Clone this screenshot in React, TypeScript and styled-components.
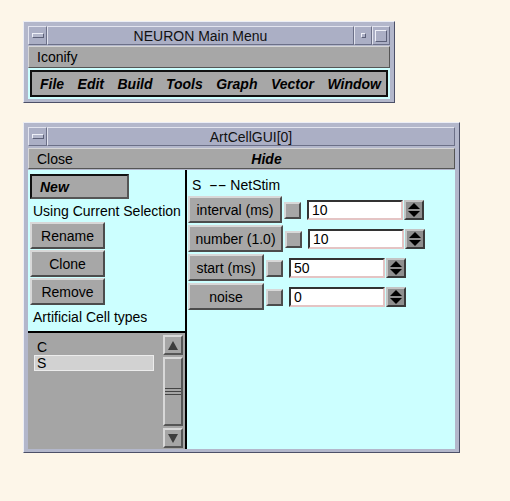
import React from 'react';
import styled, { createGlobalStyle, css } from 'styled-components';

const GlobalStyle = createGlobalStyle`
  html, body { margin: 0; padding: 0; background: #fdf6e9; }
  body {
    font-family: "Liberation Sans", Arial, sans-serif;
    font-size: 14px;
    color: #000;
  }
`;

const bevel = (light: string, dark: string, w = 2) => css`
  border: ${w}px solid;
  border-color: ${light} ${dark} ${dark} ${light};
`;

const Page = styled.div`
  width: 510px;
  height: 501px;
  box-sizing: border-box;
  padding: 21px 0 0 23px;
  display: flex;
  flex-direction: column;
  align-items: flex-start;
  gap: 19px;
`;

const Frame = styled.div<{ $w: number }>`
  width: ${p => p.$w}px;
  box-sizing: border-box;
  background: #b3b7cb;
  border: 1px solid;
  border-color: #eceef6 #4c5068 #4c5068 #eceef6;
  padding: 4px 4px 3px;
  display: flex;
  flex-direction: column;
`;

const TitleBar = styled.div`
  height: 19px;
  display: flex;
  margin-bottom: 1px;
`;

const TitleSeg = styled.div<{ $w?: number }>`
  ${bevel('#e2e4ef', '#6c7088', 1)}
  background: #abafc5;
  box-sizing: border-box;
  ${p => (p.$w ? `width: ${p.$w}px;` : 'flex: 1;')}
  display: flex;
  align-items: center;
  justify-content: center;
  color: #111;
  font-size: 14px;
`;

const MinGlyph = styled.div`
  width: 10px;
  height: 3px;
  ${bevel('#eef0f8', '#5c6078', 1)}
  background: #b3b7cb;
`;

const DotGlyph = styled.div`
  width: 3px;
  height: 3px;
  ${bevel('#eef0f8', '#5c6078', 1)}
`;

const MaxGlyph = styled.div`
  width: 10px;
  height: 10px;
  ${bevel('#eef0f8', '#5c6078', 1)}
`;

const GrayBar = styled.div<{ $h: number }>`
  height: ${p => p.$h}px;
  box-sizing: border-box;
  ${bevel('#d6d6d6', '#555', 1)}
  background: #a7a7a7;
  display: flex;
  align-items: center;
`;

const BarItem = styled.div<{ $w?: number; $bold?: boolean }>`
  ${p => (p.$w ? `width: ${p.$w}px;` : 'flex: 1; text-align: center;')}
  box-sizing: border-box;
  padding-left: ${p => (p.$w ? 8 : 0)}px;
  font-weight: ${p => (p.$bold ? 'bold' : 'normal')};
  font-style: ${p => (p.$bold ? 'italic' : 'normal')};
`;

const MenuBox = styled.div`
  height: 31px;
  box-sizing: border-box;
  border: 2px solid #ccffff;
  display: flex;
`;

const MenuInner = styled.div`
  flex: 1;
  border: 2px solid #111;
  background: #a7a7a7;
  display: flex;
  align-items: center;
  justify-content: space-between;
  padding: 0 5px 0 8px;
  font-weight: bold;
  font-style: italic;
`;

const Content = styled.div`
  height: 279px;
  display: flex;
  background: #ccffff;
  margin-top: 1px;
`;

const LeftCol = styled.div`
  width: 159px;
  box-sizing: border-box;
  border-right: 2px solid #000;
  display: flex;
  flex-direction: column;
`;

const TopSection = styled.div`
  height: 163px;
  box-sizing: border-box;
  border-bottom: 2px solid #000;
  padding: 4px 0 0 2px;
  display: flex;
  flex-direction: column;
  align-items: flex-start;
`;

const Label = styled.div<{ $h: number; $pl?: number }>`
  height: ${p => p.$h}px;
  line-height: ${p => p.$h}px;
  padding-left: ${p => p.$pl ?? 3}px;
  white-space: pre;
  overflow: hidden;
`;

const Dashes = styled.span`
  display: inline-block;
  transform: scaleX(1.9);
  transform-origin: left center;
  margin-right: 8px;
`;

const Button = styled.div<{ $w: number; $h?: number; $default?: boolean; $italic?: boolean }>`
  width: ${p => p.$w}px;
  height: ${p => p.$h ?? 27}px;
  box-sizing: border-box;
  background: #a7a7a7;
  ${p =>
    p.$default
      ? css`
          border: 2px solid;
          border-color: #111 #555 #555 #111;
        `
      : bevel('#d8d8d8', '#4c4c4c')}
  display: flex;
  align-items: center;
  justify-content: ${p => (p.$italic ? 'flex-start' : 'center')};
  padding-left: ${p => (p.$italic ? 8 : 0)}px;
  font-weight: ${p => (p.$italic ? 'bold' : 'normal')};
  font-style: ${p => (p.$italic ? 'italic' : 'normal')};
  margin-bottom: 1px;
  flex-shrink: 0;
`;

const ListSection = styled.div`
  flex: 1;
  background: #a5a5a5;
  display: flex;
  padding: 2px 2px 1px 0;
`;

const List = styled.div`
  flex: 1;
  padding: 4px 0 0 6px;
  display: flex;
  flex-direction: column;
`;

const ListItem = styled.div<{ $sel?: boolean }>`
  width: 120px;
  height: 16px;
  line-height: 14px;
  box-sizing: border-box;
  padding-left: 2px;
  border: 1px solid ${p => (p.$sel ? '#ececec' : 'transparent')};
  background: ${p => (p.$sel ? '#d2d2d2' : 'transparent')};
`;

const Scrollbar = styled.div`
  width: 20px;
  display: flex;
  flex-direction: column;
  gap: 2px;
`;

const ScrollBtn = styled.div`
  height: 20px;
  box-sizing: border-box;
  ${bevel('#d8d8d8', '#555')}
  background: #a5a5a5;
  display: flex;
  align-items: center;
  justify-content: center;
`;

const Thumb = styled.div`
  flex: 1;
  box-sizing: border-box;
  ${bevel('#d8d8d8', '#555')}
  background: #a5a5a5;
  display: flex;
  flex-direction: column;
  justify-content: center;
  gap: 2px;
`;

const Grip = styled.div<{ $c: string }>`
  height: 1px;
  background: ${p => p.$c};
`;

const RightCol = styled.div`
  flex: 1;
  padding: 4px 0 0 1px;
  display: flex;
  flex-direction: column;
`;

const Row = styled.div`
  display: flex;
  align-items: center;
  margin-bottom: 1px;
`;

const Square = styled.div`
  width: 17px;
  height: 17px;
  box-sizing: border-box;
  margin-left: 2px;
  ${bevel('#d8d8d8', '#4c4c4c')}
  background: #a7a7a7;
`;

const Field = styled.div`
  width: 96px;
  height: 20px;
  box-sizing: border-box;
  margin-left: 6px;
  border: 2px solid;
  border-color: #333 #e4c4c4 #e4c4c4 #333;
  background: #fff;
  padding-left: 3px;
  line-height: 16px;
`;

const Spinner = styled.div`
  width: 20px;
  height: 20px;
  box-sizing: border-box;
  margin-left: 1px;
  ${bevel('#c4c4c4', '#3a3a3a')}
  background: #8e8e8e;
  display: flex;
  align-items: center;
  justify-content: center;
`;

const Arrow = ({ up }: { up: boolean }) => (
  <svg width="10" height="9" viewBox="0 0 10 9">
    <polygon points={up ? '5,0 10,9 0,9' : '0,0 10,0 5,9'} fill="#3c3c3c" />
  </svg>
);

const SpinIcon = () => (
  <svg width="12" height="14" viewBox="0 0 12 14">
    <polygon points="6,0 12,6 0,6" fill="#000" />
    <polygon points="0,8 12,8 6,14" fill="#000" />
  </svg>
);

const params = [
  { label: 'interval (ms)', w: 94, value: '10' },
  { label: 'number (1.0)', w: 95, value: '10' },
  { label: 'start (ms)', w: 76, value: '50' },
  { label: 'noise', w: 76, value: '0' },
];

export default function App() {
  return (
    <>
      <GlobalStyle />
      <Page>
        <Frame $w={372}>
          <TitleBar>
            <TitleSeg $w={19}><MinGlyph /></TitleSeg>
            <TitleSeg>NEURON Main Menu</TitleSeg>
            <TitleSeg $w={18}><DotGlyph /></TitleSeg>
            <TitleSeg $w={18}><MaxGlyph /></TitleSeg>
          </TitleBar>
          <GrayBar $h={22}>
            <BarItem $w={80}>Iconify</BarItem>
          </GrayBar>
          <MenuBox>
            <MenuInner>
              {['File', 'Edit', 'Build', 'Tools', 'Graph', 'Vector', 'Window'].map(m => (
                <span key={m}>{m}</span>
              ))}
            </MenuInner>
          </MenuBox>
        </Frame>

        <Frame $w={437}>
          <TitleBar>
            <TitleSeg $w={19}><MinGlyph /></TitleSeg>
            <TitleSeg>ArtCellGUI[0]</TitleSeg>
          </TitleBar>
          <GrayBar $h={21} style={{ marginTop: 1 }}>
            <BarItem $w={50}>Close</BarItem>
            <BarItem $bold>Hide</BarItem>
          </GrayBar>
          <Content>
            <LeftCol>
              <TopSection>
                <Button $w={99} $h={25} $default $italic>New</Button>
                <Label $h={22}>Using Current Selection</Label>
                <Button $w={75}>Rename</Button>
                <Button $w={75}>Clone</Button>
                <Button $w={75}>Remove</Button>
                <Label $h={23}>Artificial Cell types</Label>
              </TopSection>
              <ListSection>
                <List>
                  <ListItem>C</ListItem>
                  <ListItem $sel>S</ListItem>
                </List>
                <Scrollbar>
                  <ScrollBtn><Arrow up /></ScrollBtn>
                  <Thumb>
                    <Grip $c="#444" />
                    <Grip $c="#444" />
                    <Grip $c="#444" />
                  </Thumb>
                  <ScrollBtn><Arrow up={false} /></ScrollBtn>
                </Scrollbar>
              </ListSection>
            </LeftCol>
            <RightCol>
              <Label $h={22} $pl={4}>
                {'S  '}<Dashes>--</Dashes>{' NetStim'}
              </Label>
              {params.map(p => (
                <Row key={p.label}>
                  <Button $w={p.w}>{p.label}</Button>
                  <Square />
                  <Field>{p.value}</Field>
                  <Spinner><SpinIcon /></Spinner>
                </Row>
              ))}
            </RightCol>
          </Content>
        </Frame>
      </Page>
    </>
  );
}
